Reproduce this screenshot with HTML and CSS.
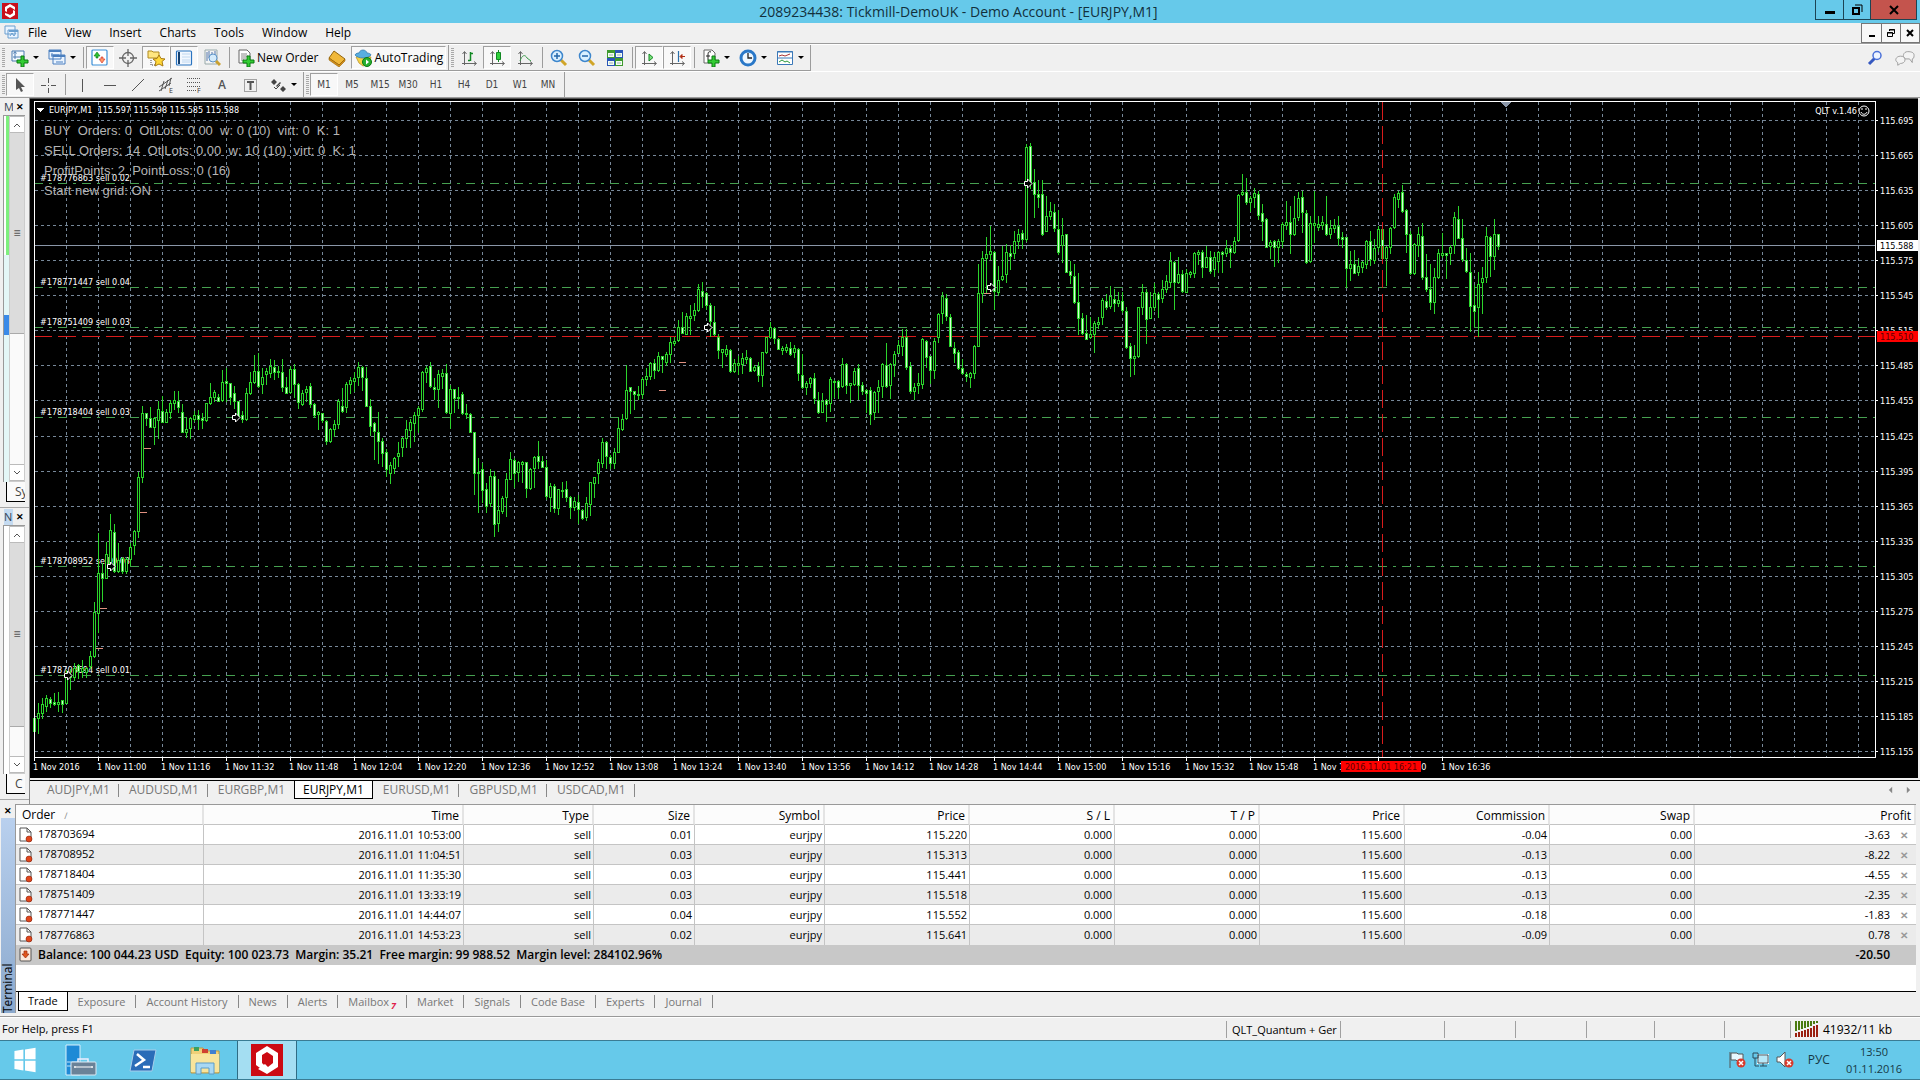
FILE: index.html
```html
<!DOCTYPE html>
<html lang="en">
<head>
<meta charset="utf-8">
<title>2089234438: Tickmill-DemoUK - Demo Account - [EURJPY,M1]</title>
<link rel="stylesheet" href="styles.css">
</head>
<body>
<header class="titlebar">
  <svg class="logo-small" viewBox="0 0 16 16"><rect width="16" height="16" fill="#c8101c"/><path d="M8 1 13 4v3l-3-2-2-1-3 2v3L3 8V4zM8 15 3 12V10l3 1 2 1 3-2V7l2 1v4z" fill="#fff"/></svg>
  <h1 class="title">2089234438: Tickmill-DemoUK - Demo Account - [EURJPY,M1]</h1>
  <div class="win-buttons">
    <button class="win-btn" aria-label="Minimize"><svg viewBox="0 0 12 12"><path d="M1 7h10v3H1z"/></svg></button>
    <button class="win-btn" aria-label="Restore"><svg viewBox="0 0 12 12"><path d="M4 1h7v7" fill="none" stroke="#000"/><path d="M2 4h6v6H2z" fill="none" stroke="#000" stroke-width="2"/></svg></button>
    <button class="win-btn win-close" aria-label="Close"><svg viewBox="0 0 12 12"><path d="M2 2l8 8M10 2l-8 8" stroke="#000" stroke-width="2"/></svg></button>
  </div>
</header>

<nav class="menubar">
  <svg class="menu-icon" viewBox="0 0 16 16" fill="#eaf4ff" stroke="#6a9fd0"><path d="M1 1h10v8H1zM4 5h10v8H4z"/><path d="M5 6h9" stroke-width="2"/><path d="M6 11l2-3 2 3 2-3" fill="none"/></svg>
  <button class="menu-item">File</button><button class="menu-item">View</button><button class="menu-item">Insert</button><button class="menu-item">Charts</button><button class="menu-item">Tools</button><button class="menu-item">Window</button><button class="menu-item">Help</button>
  <div class="mdi-buttons">
    <button class="mdi-btn" aria-label="Minimize chart"><svg viewBox="0 0 10 10"><path d="M2 7h6v2H2z"/></svg></button>
    <button class="mdi-btn" aria-label="Restore chart"><svg viewBox="0 0 10 10" fill="none" stroke="#000"><path d="M3.5 3V1.500h5v4H7M1.500 4.500h5v4h-5zM3 2h6M1 5h6"/></svg></button>
    <button class="mdi-btn" aria-label="Close chart"><svg viewBox="0 0 10 10"><path d="M2 2l6 6M8 2l-6 6" stroke="#000" stroke-width="2"/></svg></button>
  </div>
</nav>

<div class="toolbar">
  <div class="tool-group">
    <i class="grip"></i>
    <button class="tool drop" aria-label="New chart"><svg viewBox="0 0 18 18"><path d="M1 2h12v10H1z" fill="#f4faff" stroke="#4a7ab0"/><path d="M4 3v7M2 8h8M2.500 4.500l1.500-2 1.500 2" stroke="#4a7ab0" fill="none"/><path d="M10 7h3v4h4v3h-4v4h-3v-4H6v-3h4z" fill="#33cc33" stroke="#0a7a12"/></svg></button>
    <button class="tool drop" aria-label="Profiles"><svg viewBox="0 0 18 18" fill="#eaf4ff" stroke="#4a7fbf"><path d="M1 1h12v9H1zM5 6h12v9H5z"/><path d="M1 2h12M5 7h12" stroke-width="2"/><path d="M4 4v4M3 6h8M8 13h7" fill="none"/></svg></button>
    <i class="sep"></i>
    <button class="tool pressed" aria-label="Market Watch"><svg viewBox="0 0 18 18"><rect x="1" y="1" width="15" height="15" rx="1" fill="#fff" stroke="#3b8fd8" stroke-width="1.200"/><path d="M6 3l3 4H7v2H5V7H3z" fill="#2fc02f" stroke="#0a7a12" stroke-width=".6"/><path d="M11 14l-3-4h2V8h2v2h2z" fill="#f96" stroke="#c22" stroke-width=".6"/></svg></button>
    <button class="tool" aria-label="Data Window"><svg viewBox="0 0 18 18" fill="none" stroke="#666" stroke-width="1.300"><circle cx="9" cy="9" r="5.500"/><path d="M9 0v7M9 11v7M0 9h7M11 9h7"/></svg></button>
    <button class="tool pressed" aria-label="Navigator"><svg viewBox="0 0 18 18"><path d="M1 2h4l1 1h6v6H1z" fill="#ffe680" stroke="#b08a20"/><path d="M4 11v5h5" stroke="#444" fill="none" stroke-dasharray="1 1"/><path d="M12 6l2 3.500 4 .5-3 2.500 1 4.500-4-2-4 2 1-4.500L6 10l4-.5z" fill="#ffd83a" stroke="#a87a10"/></svg></button>
    <button class="tool pressed" aria-label="Terminal"><svg viewBox="0 0 18 18"><rect x="1.500" y="2" width="15" height="14" rx="1" fill="#f3f8ff" stroke="#2a74c0" stroke-width="1.200"/><path d="M3 3h2v12H3z" fill="#15406e"/><path d="M7 5h8M7 8h8M7 11h8M7 13h8" stroke="#c0d8f0"/></svg></button>
    <button class="tool" aria-label="Strategy Tester"><svg viewBox="0 0 18 18"><path d="M2 1h12v14H2z" fill="#f4f4f4" stroke="#9aa"/><path d="M4 3v9M6 2v7M9 3v5M12 2v6" stroke="#5577aa"/><circle cx="10" cy="9" r="4" fill="#d4ebfb" stroke="#5d93c8"/><path d="M13 12l4 4" stroke="#caa030" stroke-width="3"/></svg></button>
    <i class="sep"></i>
    <button class="tool text-tool"><svg viewBox="0 0 18 18"><path d="M2 1h8l3 3v10H2z" fill="#fff" stroke="#666"/><path d="M4 5h6M4 7h7M4 9h5M4 11h3" stroke="#888"/><path d="M10 7h3v4h4v3h-4v4h-3v-4H6v-3h4z" fill="#33cc33" stroke="#0a7a12"/></svg>New Order</button>
    <button class="tool" aria-label="MetaEditor"><svg viewBox="0 0 18 18"><path d="M6 2l11 8-6 6L1 9z" fill="#f0b83a" stroke="#94650c"/><path d="M1 9v2l10 7 6-6v-2l-6 6z" fill="#d89018" stroke="#94650c" stroke-width=".6"/></svg></button>
    <button class="tool text-tool pressed auto"><svg viewBox="0 0 18 18"><path d="M2 8l7-2 8 2-2 7-6 2-4-3z" fill="#f6d348" stroke="#b08a20" stroke-width=".7"/><path d="M1 6c1-2 3-2 4-2 1-4 7-4 8 0 2 0 4 1 4 2-3 4-13 4-16 0z" fill="#58aee0" stroke="#2a73a8" stroke-width=".7"/><circle cx="13" cy="13" r="4.500" fill="#28b030" stroke="#0a7a12"/><path d="M12 10.500l3 2.500-3 2.500z" fill="#fff"/></svg>AutoTrading</button>
  </div>
  <div class="tool-group">
    <i class="grip"></i>
    <button class="tool" aria-label="Bar Chart"><svg viewBox="0 0 18 18" fill="none" stroke="#666"><path d="M4.500 3v13M2 14.500h14M2.500 5l2-2.500 2 2.500M14 12.500l2.500 2-2.500 2"/><path d="M10.500 3v9M8 11.500h2M11 4.500h2" stroke="#118822" stroke-width="1.500"/></svg></button>
    <button class="tool pressed" aria-label="Candlesticks"><svg viewBox="0 0 18 18" fill="none" stroke="#666"><path d="M4.500 3v13M2 14.500h14M2.500 5l2-2.500 2 2.500M14 12.500l2.500 2-2.500 2"/><path d="M10.500 1v12" stroke="#118822"/><path d="M8.500 3.500h4v7h-4z" fill="#2fd03a" stroke="#118822"/></svg></button>
    <button class="tool" aria-label="Line Chart"><svg viewBox="0 0 18 18" fill="none" stroke="#666"><path d="M4.500 3v13M2 14.500h14M2.500 5l2-2.500 2 2.500M14 12.500l2.500 2-2.500 2"/><path d="M4 12c2-6 5-7 7-3l4 3" stroke="#3a9a4a"/></svg></button>
    <i class="sep"></i>
    <button class="tool" aria-label="Zoom In"><svg viewBox="0 0 18 18"><path d="M11 11l5 5" stroke="#d0a528" stroke-width="3"/><circle cx="7" cy="7" r="5.500" fill="#d9f0ff" stroke="#3d86cc" stroke-width="1.500"/><path d="M4 7h6M7 4v6" stroke="#2266aa" stroke-width="1.500"/></svg></button>
    <button class="tool" aria-label="Zoom Out"><svg viewBox="0 0 18 18"><path d="M11 11l5 5" stroke="#d0a528" stroke-width="3"/><circle cx="7" cy="7" r="5.500" fill="#d9f0ff" stroke="#3d86cc" stroke-width="1.500"/><path d="M4 7h6" stroke="#2266aa" stroke-width="1.500"/></svg></button>
    <button class="tool" aria-label="Tile Windows"><svg viewBox="0 0 18 18"><path d="M1 1h8v8H1zM9 9h8v8H9z" fill="#3f9a2f"/><path d="M9 1h8v8H9zM1 9h8v8H1z" fill="#2a55b8"/><path d="M2 4h6v4H2zM10 4h6v4h-6zM2 12h6v4H2zM10 12h6v4h-6z" fill="#f4fff0"/><path d="M3 6h4M11 6h4M3 14h4M11 14h4" stroke="#9ab"/></svg></button>
    <i class="sep"></i>
    <button class="tool pressed" aria-label="Auto Scroll"><svg viewBox="0 0 18 18" fill="none" stroke="#666"><path d="M4.500 3v13M2 14.500h14M2.500 5l2-2.500 2 2.500M14 12.500l2.500 2-2.500 2"/><path d="M9 5l4 3.500L9 12z" fill="#7ae07a" stroke="#118822"/></svg></button>
    <button class="tool pressed" aria-label="Chart Shift"><svg viewBox="0 0 18 18" fill="none" stroke="#666"><path d="M4.500 3v13M2 14.500h14M2.500 5l2-2.500 2 2.500M14 12.500l2.500 2-2.500 2"/><path d="M10.500 2v11" stroke="#2a6faa" stroke-width="1.200"/><path d="M17 7.500h-4M14 5.500l-2 2 2 2z" stroke="#b02a10" fill="#b02a10"/></svg></button>
    <i class="sep"></i>
    <button class="tool drop" aria-label="Indicators"><svg viewBox="0 0 18 18"><path d="M2 1h8l3 3v10H2z" fill="#fff" stroke="#666"/><path d="M9 3c-3-1-3 1-3 4v4M4 7h4" stroke="#222" fill="none"/><path d="M10 7h3v4h4v3h-4v4h-3v-4H6v-3h4z" fill="#33cc33" stroke="#0a7a12"/></svg></button>
    <button class="tool drop" aria-label="Periods"><svg viewBox="0 0 18 18"><circle cx="9" cy="9" r="7" fill="#eef7ff" stroke="#2a78c8" stroke-width="3"/><path d="M9 4v5h4" stroke="#222" fill="none" stroke-width="1.300"/></svg></button>
    <button class="tool drop" aria-label="Templates"><svg viewBox="0 0 18 18"><path d="M1.500 2.500h15v13h-15z" fill="#fff" stroke="#3a78b8"/><path d="M1 3h16M1 9h16" stroke="#3a78b8"/><path d="M3 7l3-1 3 1 5-2" stroke="#a33" fill="none"/><path d="M3 13l3-2 3 2 2-1 3 2" stroke="#2a9a3a" fill="none"/></svg></button>
  </div>
  <div class="toolbar-end">
    <button class="plain-tool" aria-label="Search"><svg viewBox="0 0 18 18"><path d="M1 15l6-6" stroke="#3558c0" stroke-width="3"/><circle cx="9" cy="6.500" r="4" fill="#eef4ff" stroke="#4a70d8" stroke-width="1.500"/></svg></button>
    <button class="plain-tool" aria-label="Chat"><svg viewBox="0 0 22 18" fill="#f4f4f4" stroke="#999"><path d="M14 2c4 0 7 1 7 4s-1 4-2 4v4l-3-4H12C8 10 8 2 14 2z"/><path d="M6 7c3 0 5 1 5 4s-3 4-5 4l-3 2v-3C-1 12 1 7 6 7z"/></svg></button>
  </div>
</div>

<div class="toolbar toolbar-lines">
  <div class="tool-group">
    <i class="grip"></i>
    <button class="tool pressed" aria-label="Cursor"><svg viewBox="0 0 18 18"><path d="M5 2v12l3-2 2 4 2-1-2-4h4z" fill="#555"/></svg></button>
    <button class="tool" aria-label="Crosshair"><svg viewBox="0 0 18 18" stroke="#555"><path d="M9.500 2v5M9.500 12v5M2 9.500h5M12 9.500h5M9 9.500h1"/></svg></button>
    <i class="sep"></i>
    <button class="tool" aria-label="Vertical Line"><svg viewBox="0 0 18 18" stroke="#555"><path d="M9.500 3v13"/></svg></button>
    <button class="tool" aria-label="Horizontal Line"><svg viewBox="0 0 18 18" stroke="#555"><path d="M3 9.500h12"/></svg></button>
    <button class="tool" aria-label="Trendline"><svg viewBox="0 0 18 18" stroke="#555"><path d="M3 15L15 3"/></svg></button>
    <button class="tool" aria-label="Equidistant Channel"><svg viewBox="0 0 18 18" stroke="#555"><path d="M2 11L15 2M2 15l12-8M4 15l3-10M8 13l3-9M12 10l2-8"/><text x="12" y="17" class="icon-letter">E</text></svg></button>
    <button class="tool" aria-label="Fibonacci Retracement"><svg viewBox="0 0 18 18" stroke="#555"><path d="M2 2.500h14M2 6.500h14M2 10.500h14M2 14.500h9" stroke-dasharray="1 1"/><text x="12" y="17" class="icon-letter">F</text></svg></button>
    <button class="tool letter">A</button>
    <button class="tool" aria-label="Text Label"><svg viewBox="0 0 18 18" stroke="#555"><path d="M3.500 3.500h12v12h-12z" fill="none" stroke-dasharray="1 1"/><path d="M6 6h7M9.500 6v8" stroke-width="2"/></svg></button>
    <button class="tool drop" aria-label="Arrows"><svg viewBox="0 0 18 18" fill="#444"><path d="M2 6l3-3 3 3-3 3zM11 13l3-3 3 3-3 3zM7 10l4-4 1 1-4 4z"/><path d="M5 11l2 2 4-4" stroke="#444" fill="none"/></svg></button>
  </div>
  <div class="tool-group periods">
    <i class="grip"></i>
    <button class="tool pressed">M1</button><button class="tool">M5</button><button class="tool">M15</button><button class="tool">M30</button><button class="tool">H1</button><button class="tool">H4</button><button class="tool">D1</button><button class="tool">W1</button><button class="tool">MN</button>
  </div>
</div>

<main class="workspace">
  <aside class="docks">
    <section class="dock dock-market">
      <div class="dock-title"><span>M</span><button aria-label="Close Market Watch">✕</button></div>
      <div class="dock-body">
        <div class="quotes"><i class="up"></i><i class="idle"></i><i class="sel"></i><i class="idle rest"></i></div>
        <div class="scroll"><button aria-label="Up"><svg viewBox="0 0 8 8"><path d="M1 6l3-3 3 3"/></svg></button><i class="thumb thumb-market">≡</i><i class="track"></i><button aria-label="Down"><svg viewBox="0 0 8 8"><path d="M1 2l3 3 3-3"/></svg></button></div>
      </div>
      <div class="dock-tab">Sy</div>
    </section>
    <section class="dock dock-nav">
      <div class="dock-title active"><span>N</span><button aria-label="Close Navigator">✕</button></div>
      <div class="dock-body">
        <div class="quotes"></div>
        <div class="scroll"><button aria-label="Up"><svg viewBox="0 0 8 8"><path d="M1 6l3-3 3 3"/></svg></button><i class="thumb thumb-nav">≡</i><i class="track"></i><button aria-label="Down"><svg viewBox="0 0 8 8"><path d="M1 2l3 3 3-3"/></svg></button></div>
      </div>
      <div class="dock-tab">C</div>
    </section>
  </aside>
  <section class="chart-area">
    <div class="chart" id="chart"></div>
    <div class="chart-tabs">
      <button>AUDJPY,M1</button><button>AUDUSD,M1</button><button class="no-sep">EURGBP,M1</button><button class="active">EURJPY,M1</button><button>EURUSD,M1</button><button>GBPUSD,M1</button><button>USDCAD,M1</button>
      <div class="tab-arrows"><svg viewBox="0 0 6 8"><path d="M5 0v8L1 4z"/></svg><svg viewBox="0 0 6 8"><path d="M1 0v8l4-4z"/></svg></div>
    </div>
  </section>
</main>

<section class="terminal">
  <div class="terminal-side"><button aria-label="Close Terminal">✕</button><span>Terminal</span></div>
  <div class="terminal-main">
    <div class="table-wrap">
      <table class="orders">
        <colgroup><col class="c-order"><col class="c-time"><col class="c-type"><col class="c-size"><col class="c-symbol"><col class="c-num"><col class="c-num"><col class="c-num"><col class="c-num"><col class="c-num"><col class="c-num"><col><col class="c-close"></colgroup>
        <thead><tr><th>Order <span class="sort">∕</span></th><th>Time</th><th>Type</th><th>Size</th><th>Symbol</th><th>Price</th><th>S / L</th><th>T / P</th><th>Price</th><th>Commission</th><th>Swap</th><th colspan="2">Profit</th></tr></thead>
        <tbody id="orders"></tbody>
        <tfoot><tr><td colspan="11"><svg class="row-icon" viewBox="0 0 14 16"><rect x="1" y="1" width="11" height="13" rx="1" fill="#fbe9dc" stroke="#555"/><path d="M5 4h3v3h2l-3.500 4L3 7h2z" fill="#e0561c" stroke="#a02808" stroke-width=".7"/></svg>Balance: 100 044.23 USD&nbsp; Equity: 100 023.73&nbsp; Margin: 35.21&nbsp; Free margin: 99 988.52&nbsp; Margin level: 284102.96%</td><td>-20.50</td><td></td></tr></tfoot>
      </table>
    </div>
    <div class="terminal-tabs">
      <button class="active">Trade</button><button>Exposure</button><button>Account History</button><button>News</button><button>Alerts</button><button>Mailbox<sub>7</sub></button><button>Market</button><button>Signals</button><button>Code Base</button><button>Experts</button><button>Journal</button>
    </div>
  </div>
</section>

<footer class="statusbar">
  <span class="help">For Help, press F1</span>
  <span class="pane profile">QLT_Quantum + Ger</span><span class="pane w102"></span><span class="pane w71"></span><span class="pane w71"></span><span class="pane w68"></span><span class="pane w70"></span><span class="pane w66"></span>
  <span class="pane traffic"><svg viewBox="0 0 24 16"><path d="M1 0v10M4 0v9M7 0v8M10 0v7M13 0v6M16 0v5M19 0v3M22 0v2" stroke="#4a7a10" stroke-width="2"/><path d="M1 12v4M4 11v5M7 10v6M10 9v7M13 8v8M16 7v9M19 5v11M22 4v12" stroke="#9a2010" stroke-width="2"/></svg>41932/11 kb</span>
</footer>

<footer class="taskbar">
  <button class="task start" aria-label="Start"><svg viewBox="0 0 28 32" fill="#fff"><path d="M1 5l11-2v12H1zM14 3l13-2v14H14zM1 17h11v12L1 27zM14 17h13v14l-13-2z"/></svg></button>
  <button class="task" aria-label="Server Manager"><svg viewBox="0 0 32 32"><path d="M1 1h14v30H1z" fill="#1e8ad6" stroke="#d8f0fc"/><path d="M2 18h12M2 22h12" stroke="#bfe4f8"/><path d="M13 18V15h10v3" fill="none" stroke="#eef" stroke-width="1.500"/><rect x="6" y="18" width="25" height="13" rx="1" fill="#6a8298" stroke="#dceaf4"/><path d="M9 23h19M10 22v2M27 22v2" stroke="#fff"/></svg></button>
  <button class="task" aria-label="PowerShell"><svg viewBox="0 0 32 32"><path d="M7 6h22l-4 21H3z" fill="#2a6cb8" stroke="#a8cdea"/><path d="M10 10l7 6-9 6M16 23h7" fill="none" stroke="#fff" stroke-width="2.500"/></svg></button>
  <button class="task" aria-label="File Explorer"><svg viewBox="0 0 32 32"><path d="M2 4h12l2 3h14v22H2z" fill="#f0d078" stroke="#b89848"/><path d="M5 3h5v4H5z" fill="#3aa060"/><path d="M13 5h6v4h-6z" fill="#d04030"/><path d="M21 6h6v4h-6z" fill="#4080d0"/><path d="M2 10h28v18H2z" fill="#f8e49c"/><path d="M7 30V19h18v11h-5v-6h-8v6z" fill="#a8d8f4" stroke="#5a9cc8"/></svg></button>
  <button class="task current" aria-label="Trading terminal"><svg viewBox="0 0 32 32"><rect width="32" height="32" fill="#cc0a12"/><path d="M16 2l11 7v6l-5-3-6-4-5 3v8l2 2-4 3-4-3V9zM16 30L7 25l7-5 3 3 5-4v-7l5 3v8z" fill="#fff"/></svg></button>
  <div class="tray">
    <svg viewBox="0 0 18 18"><path d="M2 1v16M3 2h6l1 1h5v7H9L8 9H3z" fill="#e8f8ff" stroke="#555"/><circle cx="13" cy="12" r="4.500" fill="#d83a2c"/><path d="M11 10l4 4M15 10l-4 4" stroke="#fff" stroke-width="1.500"/></svg>
    <svg viewBox="0 0 18 18" fill="none" stroke="#2a4a5a"><path d="M6 4h10v8H6z" fill="#b8e8f8" stroke="#fff" stroke-width="2"/><path d="M6 4h10v8H6zM8 15h7M11 12v3M1 2h5v5H1zM3 7v8h4"/></svg>
    <svg viewBox="0 0 18 18"><path d="M1 6h3l5-5v15l-5-5H1z" fill="#fff" stroke="#555"/><circle cx="13" cy="12" r="4.500" fill="#d83a2c"/><path d="M11 10l4 4M15 10l-4 4" stroke="#fff" stroke-width="1.500"/></svg>
    <span class="lang">РУС</span>
    <time class="clock">13:50<br>01.11.2016</time>
  </div>
</footer>
<script src="chart.js"></script>
</body>
</html>
```

FILE: styles.css
```css
* { box-sizing: border-box; }
html, body { height: 100%; margin: 0; }
body {
  display: flex; flex-direction: column; overflow: hidden;
  background: #f0f0f0; color: #000;
  font: 12px/16px "Open Sans", "Noto Sans", sans-serif;
}
button { font: inherit; color: inherit; border: 0; padding: 0; margin: 0; background: none; }
svg { display: block; flex: none; }
i { font-style: normal; }

/* window caption and menu */
.titlebar { flex: none; height: 23px; background: #66c9ea; display: grid; grid-template-columns: 1fr auto 1fr; align-items: start; padding-right: 3px; }
.logo-small { width: 16px; height: 16px; margin: 3px 0 0 2px; }
.title { margin: 0; font-size: 14px; line-height: 23px; font-weight: 400; color: #12303c; }
.win-buttons { display: flex; justify-self: end; border: 1px solid #1c4454; border-top: 0; }
.win-btn { width: 27px; height: 19px; display: grid; place-items: center; border-left: 1px solid #1c4454; }
.win-btn:first-child { border-left: 0; }
.win-btn svg { width: 12px; height: 12px; }
.win-close { width: 46px; background: #c4544d; }
.menubar { flex: none; height: 21px; display: flex; align-items: center; gap: 18px; border-bottom: 1px solid #9c9c9c; padding-left: 4px; }
.menu-icon { width: 16px; height: 16px; margin-right: -10px; }
.menu-item { line-height: 20px; }
.mdi-buttons { margin-left: auto; display: flex; border: 1px solid #777; }
.mdi-btn { width: 19px; height: 18px; display: grid; place-items: center; background: #f8f8f8; border-left: 1px solid #777; }
.mdi-btn:first-child { border-left: 0; }
.mdi-btn svg { width: 10px; height: 10px; }

/* toolbars */
.toolbar { flex: none; height: 27px; display: flex; align-items: stretch; border-top: 1px solid #fff; }
.tool-group { display: flex; align-items: center; border-right: 1px solid #9c9c9c; border-bottom: 1px solid #9c9c9c; padding-right: 2px; }
.toolbar-lines { border-bottom: 1px solid #9c9c9c; }
.toolbar-lines .tool-group { border-bottom: 0; }
.grip { flex: none; width: 3px; height: 20px; margin: 0 1px 0 2px; background: repeating-linear-gradient(#a8a8a8 0 1px, transparent 1px 2px); }
.sep { flex: none; width: 1px; height: 21px; margin: 0 2px 0 3px; background: #9c9c9c; }
.tool { flex: none; width: 28px; height: 23px; display: flex; align-items: center; justify-content: center; border: 1px solid transparent; background-clip: padding-box; }
.tool svg { width: 18px; height: 18px; }
.tool.drop { width: 37px; gap: 4px; }
.tool.drop::after { content: ""; border: 3px solid transparent; border-top-color: #000; border-bottom: 0; }
.pressed { border-color: #a0a0a0 #fff #fff #a0a0a0; background-color: #f8f8f8; }
.text-tool { width: auto; padding: 0 4px; gap: 2px; }
.auto { padding: 0 2px; }
.toolbar-end { margin-left: auto; display: flex; align-items: center; gap: 8px; padding-right: 5px; }
.plain-tool svg { height: 18px; width: 20px; }
.icon-letter { font: 7px "Open Sans", sans-serif; fill: #333; stroke: none; }
.letter { font-weight: 600; color: #555; }
.periods .tool { font: 10px "DejaVu Sans Condensed", "DejaVu Sans", sans-serif; color: #444; }

/* docked panels */
.workspace { flex: 1; min-height: 0; display: grid; grid-template-columns: 30px minmax(0, 1fr); }
.docks { display: flex; flex-direction: column; min-height: 0; border-right: 1px solid #888; padding-bottom: 4px; }
.dock { display: flex; flex-direction: column; min-height: 0; border-bottom: 1px solid #a8a8a8; }
.dock-market { flex: 411; }
.dock-nav { flex: 292; }
.dock-title { flex: none; height: 17px; display: flex; align-items: center; padding-left: 4px; }
.dock-title span { width: 9px; overflow: hidden; font-size: 11px; color: #345; }
.dock-title.active span { background: #c4daf0; }
.dock-title button { font-size: 9px; font-weight: 700; width: 14px; }
.dock-body { flex: 1; min-height: 0; display: flex; margin: 0 4px 0 3px; border-top: 1px solid #999; border-left: 1px solid #999; background: #fff; }
.quotes { width: 5px; display: flex; flex-direction: column; }
.quotes .up { height: 139px; background: #7ef07e; margin-left: 2px; }
.quotes .idle { height: 60px; background: #e4f7f7; }
.quotes .sel { height: 20px; background: #3a8ae8; }
.quotes .rest { flex: 1; }
.scroll { flex: 1; display: flex; flex-direction: column; border: 1px solid #ccc; border-top: 0; }
.scroll button { flex: none; height: 17px; display: grid; place-items: center; border-bottom: 1px solid #bbb; border-top: 1px solid #bbb; }
.scroll svg { width: 8px; height: 8px; fill: none; stroke: #555; }
.thumb { background: #dcdcdc; border-bottom: 1px solid #aaa; display: grid; place-items: center; color: #555; font-size: 12px; }
.track { flex: 64; background: #fafafa; }
.thumb-market { flex: 98; }
.thumb-nav { flex: 398; }
.dock-tab { flex: none; height: 20px; margin: 0 4px 5px 6px; padding-left: 8px; overflow: hidden; border: 1px solid #000; border-width: 0 0 1px 1px; background: #fafafa; color: #444; line-height: 19px; }

/* chart window */
.chart-area { display: flex; flex-direction: column; min-width: 0; min-height: 0; }
.chart { flex: 1; min-height: 0; background: #000; border-top: 1px solid #555; margin-right: 2px; overflow: hidden; }
.chart svg { width: 100%; height: 100%; }
.chart text { font: 9px "DejaVu Sans Condensed", "DejaVu Sans", sans-serif; fill: #fff; white-space: pre; }
.chart text.comment { font: 13px "Liberation Sans", Arial, sans-serif; fill: #b4b4b4; }
.chart text.on-white { fill: #000; }
.chart text.on-red { fill: #5a0000; }
.chart-tabs { flex: none; height: 24px; margin-top: 2px; display: flex; align-items: flex-start; border-top: 1px solid #000; padding-left: 7px; color: #777; }
.chart-tabs button { height: 18px; padding: 0 9px 0 10px; position: relative; line-height: 18px; }
.chart-tabs button:not(.active):not(.no-sep)::after, .terminal-tabs button:not(.active)::after { content: ""; position: absolute; right: 0; top: 3px; height: 13px; width: 1px; background: #888; }
.chart-tabs .active { background: #fff; color: #000; border: 1px solid #000; border-top: 0; padding: 0 8px; }
.tab-arrows { margin-left: auto; display: flex; gap: 13px; padding: 5px 9px 0 0; }
.tab-arrows svg { width: 5px; height: 8px; fill: #888; }

/* terminal */
.terminal { flex: none; height: 213px; display: flex; border-bottom: 1px solid #999; padding-bottom: 3px; }
.terminal-side { width: 15px; display: flex; flex-direction: column; align-items: center; }
.terminal-side button { font-size: 9px; line-height: 14px; font-weight: 700; }
.terminal-side span { flex: 1; width: 14px; writing-mode: vertical-rl; transform: rotate(180deg); line-height: 14px; background: linear-gradient(#8ba9cd, #b9d0ee); }
.terminal-main { flex: 1; min-width: 0; display: flex; flex-direction: column; margin-right: 4px; border-top: 1px solid #999; border-left: 1px solid #999; }
.table-wrap { flex: 1; background: #fff; }
.orders { width: 100%; table-layout: fixed; border-collapse: separate; border-spacing: 0; font-size: 11px; line-height: 16px; }
.c-order { width: 188px; } .c-time { width: 260px; } .c-type { width: 130px; } .c-size { width: 101px; } .c-symbol { width: 130px; } .c-num { width: 145px; } .c-close { width: 24px; }
.orders th, .orders td { text-align: right; white-space: nowrap; overflow: hidden; }
.orders th { height: 19px; padding: 2px 3px 0 6px; font-size: 12px; font-weight: 400; background: #fcfcfc; border-right: 2px solid #e4e4e4; border-bottom: 1px solid #c4c4c4; }
.orders th:first-child, .orders td:first-child { text-align: left; }
.orders td { height: 20px; padding: 0 2px; border-right: 1px solid #c4c4c4; border-bottom: 1px solid #c4c4c4; }
.orders td:nth-last-child(-n+2) { border-right: 0; }
.orders tbody tr:nth-child(even) { background: #ebebeb; }
.orders tbody tr:last-child td { border-bottom: 0; }
.orders tfoot td { background: #c8c8c8; border: 0; font-weight: 600; font-size: 12px; }
.orders td:last-child { text-align: center; }
.orders td button { font-size: 10px; color: #999; font-weight: 700; line-height: 16px; display: inline-block; }
.sort { color: #888; margin-left: 6px; font-size: 9px; }
.row-icon { width: 14px; height: 16px; display: inline-block; vertical-align: middle; margin: -2px 5px 0 1px; }
.terminal-tabs { flex: none; height: 22px; display: flex; align-items: flex-start; border-top: 1px solid #000; color: #777; font-size: 11px; padding-left: 2px; }
.terminal-tabs button { height: 19px; line-height: 18px; padding: 0 11px 0 10px; position: relative; }
.terminal-tabs .active { background: #fff; color: #000; border: 1px solid #000; border-top: 0; padding: 0 9px; }
.terminal-tabs sub { color: #e0204a; font-size: 9px; line-height: 0; font-style: italic; font-weight: 700; padding-left: 2px; }

/* status bar */
.statusbar { flex: none; height: 23px; display: flex; align-items: center; border-top: 1px solid #fff; padding-left: 2px; font-size: 11px; }
.help { flex: 1; }
.pane { height: 17px; border-left: 1px solid #a0a0a0; line-height: 17px; white-space: nowrap; overflow: hidden; }
.profile { width: 115px; padding-left: 5px; border-right: 1px solid #a0a0a0; }
.w102 { width: 103px; border-left: 0; } .w71 { width: 71px; } .w68 { width: 68px; } .w70 { width: 70px; } .w66 { width: 66px; }
.traffic { width: 130px; display: flex; align-items: center; gap: 4px; padding-left: 4px; font-size: 12px; }
.traffic svg { width: 24px; height: 16px; }

/* taskbar */
.taskbar { flex: none; height: 40px; display: flex; background: #66c9ea; border-top: 1px solid #3a7c94; border-bottom: 1px solid #3a7c94; }
.task { width: 62px; display: grid; place-items: center; }
.task svg { width: 32px; height: 32px; }
.task.start { width: 50px; }
.start svg { width: 28px; height: 26px; }
.task.current { width: 60px; margin-left: 1px; background: #a4def2; border: 1px solid #2f6c84; border-width: 0 1px; }
.tray { margin-left: auto; display: flex; align-items: center; gap: 6px; padding-right: 18px; color: #173946; }
.tray svg { width: 18px; height: 18px; }
.lang { margin: 0 10px 0 8px; }
.clock { text-align: center; line-height: 17px; font-size: 11px; }
```

FILE: chart.js
```js
// One bar per entry: high, body top, body bottom, low (screen y); trailing "d" marks a falling bar.
const bars = `
718 718 731 735,703 713 718 733,698 704 713 718,695 698 706 711,697 699 703 707 d,693 702 704 705 d,692 702 704 711,700 700 704 712 d
670 675 703 703,669 675 677 689,663 668 677 680,664 665 671 678 d,660 668 671 677,667 668 672 677,651 656 666 668,602 612 656 657
533 573 613 632,563 573 578 601 d,542 554 578 578,514 530 565 567,524 532 571 572 d,543 560 571 572,557 558 571 573 d,557 559 571 573
543 547 559 565,530 531 545 554,472 477 531 537,406 413 477 482,413 413 418 425 d,407 418 427 427 d,417 418 427 444,401 409 420 438
396 411 422 422 d,409 412 422 422,400 403 412 418,391 400 403 409,391 401 407 412 d,404 412 432 432 d,417 429 432 437,417 418 428 438
411 415 419 421,410 415 419 429 d,413 418 420 428 d,403 403 420 421,383 397 403 404,390 392 397 401,394 397 401 401 d,370 382 400 401
368 381 383 401 d,383 383 397 404 d,386 393 401 408 d,401 401 417 417 d,411 415 419 422 d,388 393 419 420,372 382 393 394,355 371 382 383
353 371 386 387 d,368 377 384 393,368 371 374 384,359 366 373 377,360 367 372 379 d,366 371 372 377,359 372 387 391 d,377 387 393 393 d
366 369 392 393,364 369 384 397 d,383 384 402 408 d,390 393 404 405,386 389 392 401,383 386 404 407 d,403 404 415 417 d,411 412 414 429
413 413 420 422 d,420 421 441 444 d,428 429 441 442,420 424 429 436,399 401 424 428,388 406 411 412 d,382 384 407 412,377 380 384 393
372 378 381 391,362 367 377 385,366 367 377 390 d,367 378 406 406 d,399 406 426 435 d,422 423 431 459 d,412 432 441 463 d,438 441 453 466 d
449 452 469 476 d,462 465 473 483,457 458 468 473,442 453 456 466,437 438 447 456,420 429 438 447,419 422 430 447,412 415 423 441
406 408 415 432,371 372 409 411,366 368 372 382,362 366 386 387 d,378 387 389 399 d,370 374 389 407,369 373 376 388,364 373 412 413 d
385 389 413 428,389 389 398 412 d,387 397 398 408,392 394 413 414 d,404 413 414 418 d,413 414 432 432 d,432 432 473 494 d,458 472 473 512
463 469 490 502 d,483 489 506 512 d,469 476 503 506,471 476 524 536 d,479 510 523 531,496 498 511 513,473 479 497 516,452 459 479 479
458 460 473 487 d,461 462 472 481,461 462 464 482,462 462 488 497 d,468 469 488 489,456 457 468 487,441 456 461 468 d,456 461 467 467 d
460 467 496 499 d,483 486 497 511,484 486 508 512 d,489 489 508 514,482 490 491 497,481 489 497 501 d,496 497 507 518 d,497 501 507 510
495 502 509 523 d,509 510 518 519 d,497 503 517 520,482 482 504 515,477 477 483 497,459 462 473 483,438 442 463 467,441 442 456 468 d
455 457 463 468 d,448 452 463 468,418 428 452 452,414 419 429 430,365 390 418 419,387 387 391 413 d,391 391 394 409 d,386 394 395 399
377 379 394 398,368 376 379 385,362 363 376 379,359 363 370 378 d,352 356 370 371,356 356 359 372 d,352 354 362 365,337 342 354 362
337 341 343 345,320 327 340 341,312 327 333 333 d,313 316 334 334,305 316 318 334,303 310 315 320,284 289 310 311,282 291 296 307 d
292 293 305 309 d,303 305 321 336 d,306 322 334 335 d,334 337 350 358 d,349 349 352 367,345 349 354 356,349 350 371 372 d,359 363 371 372
356 363 365 374,353 358 364 373,350 357 359 363,357 358 371 371 d,365 367 370 371,362 366 375 381 d,352 352 375 386,337 337 352 353
322 327 337 338,327 328 338 343 d,338 339 349 349 d,346 348 350 354,344 347 350 352,342 348 354 355 d,345 348 352 357,348 349 373 380 d
354 375 387 388 d,381 383 387 394,377 378 383 387,373 378 398 403 d,392 400 412 413 d,393 401 412 412,399 400 404 421 d,377 379 403 411
380 381 382 397,380 381 387 398 d,358 364 386 387,363 364 385 393 d,383 383 385 402,368 371 384 385,364 368 385 399 d,382 385 391 394 d
389 390 393 412 d,387 390 414 424 d,391 392 412 419,380 387 391 412,363 364 386 397,343 365 386 387 d,363 364 385 398,351 354 364 376
340 345 353 353,329 337 346 355,329 337 367 369 d,362 366 391 393 d,383 387 391 399,373 383 385 393,338 339 384 388,340 341 357 367 d
356 356 370 383 d,338 341 370 378,313 314 337 342,292 296 313 323,294 298 316 320 d,314 317 346 346 d,342 348 353 362 d,350 352 368 369 d
359 368 373 374 d,372 374 376 381 d,372 373 377 387,345 346 373 378,264 293 346 346,251 258 293 302,237 254 258 293,226 251 254 259
251 252 291 309 d,266 280 292 295,246 276 279 280,244 252 274 282,245 253 256 269 d,231 241 253 258,229 234 241 248,230 233 239 248 d
144 147 239 241,143 146 183 188 d,169 182 194 217 d,180 194 197 207 d,180 194 234 235 d,196 216 231 231,202 211 216 219,204 212 228 231 d
210 229 252 254 d,218 235 245 262,234 234 272 272 d,261 271 275 283 d,264 276 302 303 d,273 302 318 334 d,313 318 333 334 d,315 333 339 339 d
317 334 337 338,321 323 334 352,317 322 324 328,298 300 317 324,294 301 307 309 d,286 296 306 308,289 299 303 311 d,292 300 303 306
292 301 310 312 d,307 311 347 348 d,343 346 358 376 d,345 356 358 374,307 307 356 357,284 292 307 314,289 292 319 343 d,292 307 318 318
283 293 307 310,292 294 299 317 d,280 289 298 302,275 281 289 292,252 261 282 287,261 262 282 309 d,257 274 282 283,270 274 291 292 d
269 273 292 292,271 272 274 277,252 253 273 277,250 252 254 264,250 252 267 277 d,246 257 267 267,251 257 271 273 d,252 257 269 276
251 252 261 272,251 252 254 272 d,240 248 253 256,245 248 252 267 d,237 241 252 253,194 195 240 241,174 192 194 195,178 192 202 204 d
196 198 202 211,188 193 197 207,191 194 215 219 d,204 213 221 240 d,218 219 247 247 d,240 242 246 258,240 241 247 266 d,239 241 247 262
222 224 241 247,201 222 225 229,206 222 234 253 d,196 218 234 235,192 198 217 220,191 197 212 232 d,210 213 262 263 d,216 223 261 262
191 223 225 242,216 224 227 230,216 222 225 229,196 224 234 235 d,220 228 234 238,219 225 228 232,216 226 238 245 d,232 237 239 247 d
237 237 268 287 d,251 264 268 280,250 264 273 273 d,258 266 272 275,261 262 267 272,240 241 264 268,231 241 259 265 d,239 248 260 263
226 229 247 251,228 229 258 259 d,246 247 258 285,227 228 247 253,194 197 227 228,191 193 199 207,185 192 211 212 d,209 210 234 252 d
231 234 273 274 d,243 244 273 274,227 234 245 256,223 236 277 279 d,254 277 289 291 d,264 289 302 309 d,268 277 302 313,249 253 277 278
233 253 255 257,253 253 255 278 d,245 247 253 264,212 217 245 253,206 219 238 238 d,219 238 259 261 d,248 260 271 272 d,253 272 306 331 d
285 305 311 326 d,272 284 307 336,267 278 282 313,227 236 277 282,236 237 256 276 d,219 234 256 269,234 234 246 249 d
`.trim().split(/[,\n]/).map(s => s.split(' '));

const LEFT = 30, TOP = 99;          // y data starts at the caption edge of the chart window
const entries = [
  ['178776863', '0.02', 183, 1028], ['178771447', '0.04', 287, 991], ['178751409', '0.03', 327, 708],
  ['178718404', '0.03', 417, 236], ['178708952', '0.03', 566, 111], ['178703694', '0.01', 675, 68]
];
const marks = [[144, 448], [140, 512], [100, 608], [96, 648], [659, 390], [679, 362], [984, 293]];
const times = ['1 Nov 2016'];
for (let m = 660; m <= 996; m += 16) times.push('1 Nov ' + Math.floor(m / 60) + ':' + String(m % 60).padStart(2, '0'));

function draw() {
  const host = document.getElementById('chart');
  const w = host.clientWidth, h = host.clientHeight;
  const right = LEFT + w - 43, bottom = TOP + h - 21, end = LEFT + w;
  let s = '';
  const line = (x1, y1, x2, y2, c, dash = '') => { s += `<path d="M${x1} ${y1}L${x2} ${y2}" stroke="${c}" stroke-dasharray="${dash}"/>`; };
  const rect = (x, y, rw, rh, c) => { s += `<rect x="${x}" y="${y}" width="${rw}" height="${rh}" fill="${c}"/>`; };
  const text = (x, y, t, cls = '', anchor = 'start') => { s += `<text x="${x}" y="${y}" class="${cls}" text-anchor="${anchor}">${t}</text>`; };

  for (let x = 66; x < right; x += 32) line(x + .5, 102, x + .5, bottom, '#778899', '3 3');
  for (let k = 0; 120 + k * 35.06 < bottom; k++) {
    const y = Math.round(120 + k * 35.06);
    line(35, y + .5, right, y + .5, '#778899', '3 3');
    line(right, y + .5, right + 3, y + .5, '#fff');
    text(right + 5, y + 4, ((115695 - k * 30) / 1000).toFixed(3));
  }
  line(34, 245.5, right, 245.5, '#8a96a8');
  for (const [id, lots, y] of entries) {
    line(34, y + .5, right, y + .5, '#46a050', '9 6 3 6');
    text(40, y - 2, `#${id} sell ${lots}`);
  }
  line(34, 336.5, right, 336.5, '#d81c1c', '18 6');
  bars.forEach(([hi, t, b, lo, down], i) => {
    const x = 34 + i * 4;
    rect(x, +hi, 1, lo - hi + 1, '#2bd42b');
    rect(x - 1, +t, 3, b - t + 1, '#2bd42b');
    if (b - t > 1) rect(x, +t + 1, 1, b - t - 1, down ? '#d8ffd8' : '#000');
  });
  line(1382.5, 102, 1382.5, bottom, '#d81c1c', '18 6');
  for (const [x, y] of marks) line(x, y + .5, x + 7, y + .5, '#e09080');
  for (const [, , y, x] of entries) s += `<path shape-rendering="auto" d="M${x - 3.5} ${y - 1.5}h3v-2.500l4.500 4.500-4.500 4.500v-2.500h-3z" fill="#000" stroke="#fff"/>`;
  text(44, 135, 'BUY  Orders: 0  OtlLots: 0.00  w: 0 (10)  virt: 0  K: 1', 'comment');
  text(44, 155, 'SELL Orders: 14  OtlLots: 0.00  w: 10 (10)  virt: 0  K: 1', 'comment');
  text(44, 175, 'ProfitPoints: 2  PointLoss: 0 (16)', 'comment');
  text(44, 195, 'Start new grid: ON', 'comment');
  s += '<path d="M37 108h7l-3.500 4z" fill="#fff"/><path d="M1501 102h10l-5 6z" fill="#8a96a8"/>';
  text(49, 113, 'EURJPY,M1  115.597 115.598 115.585 115.588');
  text(right - 18, 114, 'QLT v.1.46', '', 'end');
  s += `<g shape-rendering="auto" fill="none" stroke="#fff"><circle cx="${right - 11}" cy="111" r="5"/><path d="M${right - 14} 112c1 3 5 3 6 0M${right - 13} 108v2M${right - 9} 108v2"/></g>`;

  s += `<path d="M34.500 ${bottom + .5}V101.500H${right + .5}V${bottom + .5}z" fill="none" stroke="#fff"/>`;
  times.forEach((t, k) => { const x = 34 + k * 64; line(x + .5, bottom, x + .5, bottom + 4, '#fff'); text(x - 1, bottom + 13, t); });
  rect(1341, bottom + 4, 80, 11, '#f00');
  text(1381, bottom + 13, '2016.11.01 16:21', 'on-red', 'middle');
  rect(right + 2, 240, end - right - 2, 11, '#fff');
  text(right + 5, 249, '115.588', 'on-white');
  rect(right + 2, 331, end - right - 2, 11, '#f00');
  text(right + 5, 340, '115.510', 'on-red');
  host.innerHTML = `<svg viewBox="${LEFT} ${TOP} ${w} ${h}" shape-rendering="crispEdges">${s}</svg>`;
}
draw();
addEventListener('resize', draw);

// Open positions
const sheet = `<svg class="row-icon" viewBox="0 0 14 16"><path d="M1 1h7l4 4v9H1z" fill="#fff" stroke="#555"/><path d="M8 1v4h4" fill="none" stroke="#555"/><circle cx="10" cy="12" r="3" fill="#e0461c" stroke="#8a2008" stroke-width=".6"/></svg>`;
document.getElementById('orders').innerHTML = [
  ['178703694', '10:53:00', '0.01', '115.220', '-0.04', '-3.63'], ['178708952', '11:04:51', '0.03', '115.313', '-0.13', '-8.22'],
  ['178718404', '11:35:30', '0.03', '115.441', '-0.13', '-4.55'], ['178751409', '13:33:19', '0.03', '115.518', '-0.13', '-2.35'],
  ['178771447', '14:44:07', '0.04', '115.552', '-0.18', '-1.83'], ['178776863', '14:53:23', '0.02', '115.641', '-0.09', '0.78']
].map(([id, t, size, open, com, profit]) => `<tr><td>${sheet}${id}</td><td>2016.11.01 ${t}</td><td>sell</td><td>${size}</td><td>eurjpy</td><td>${open}</td><td>0.000</td><td>0.000</td><td>115.600</td><td>${com}</td><td>0.00</td><td>${profit}</td><td><button aria-label="Close order ${id}">✕</button></td></tr>`).join('');
```
